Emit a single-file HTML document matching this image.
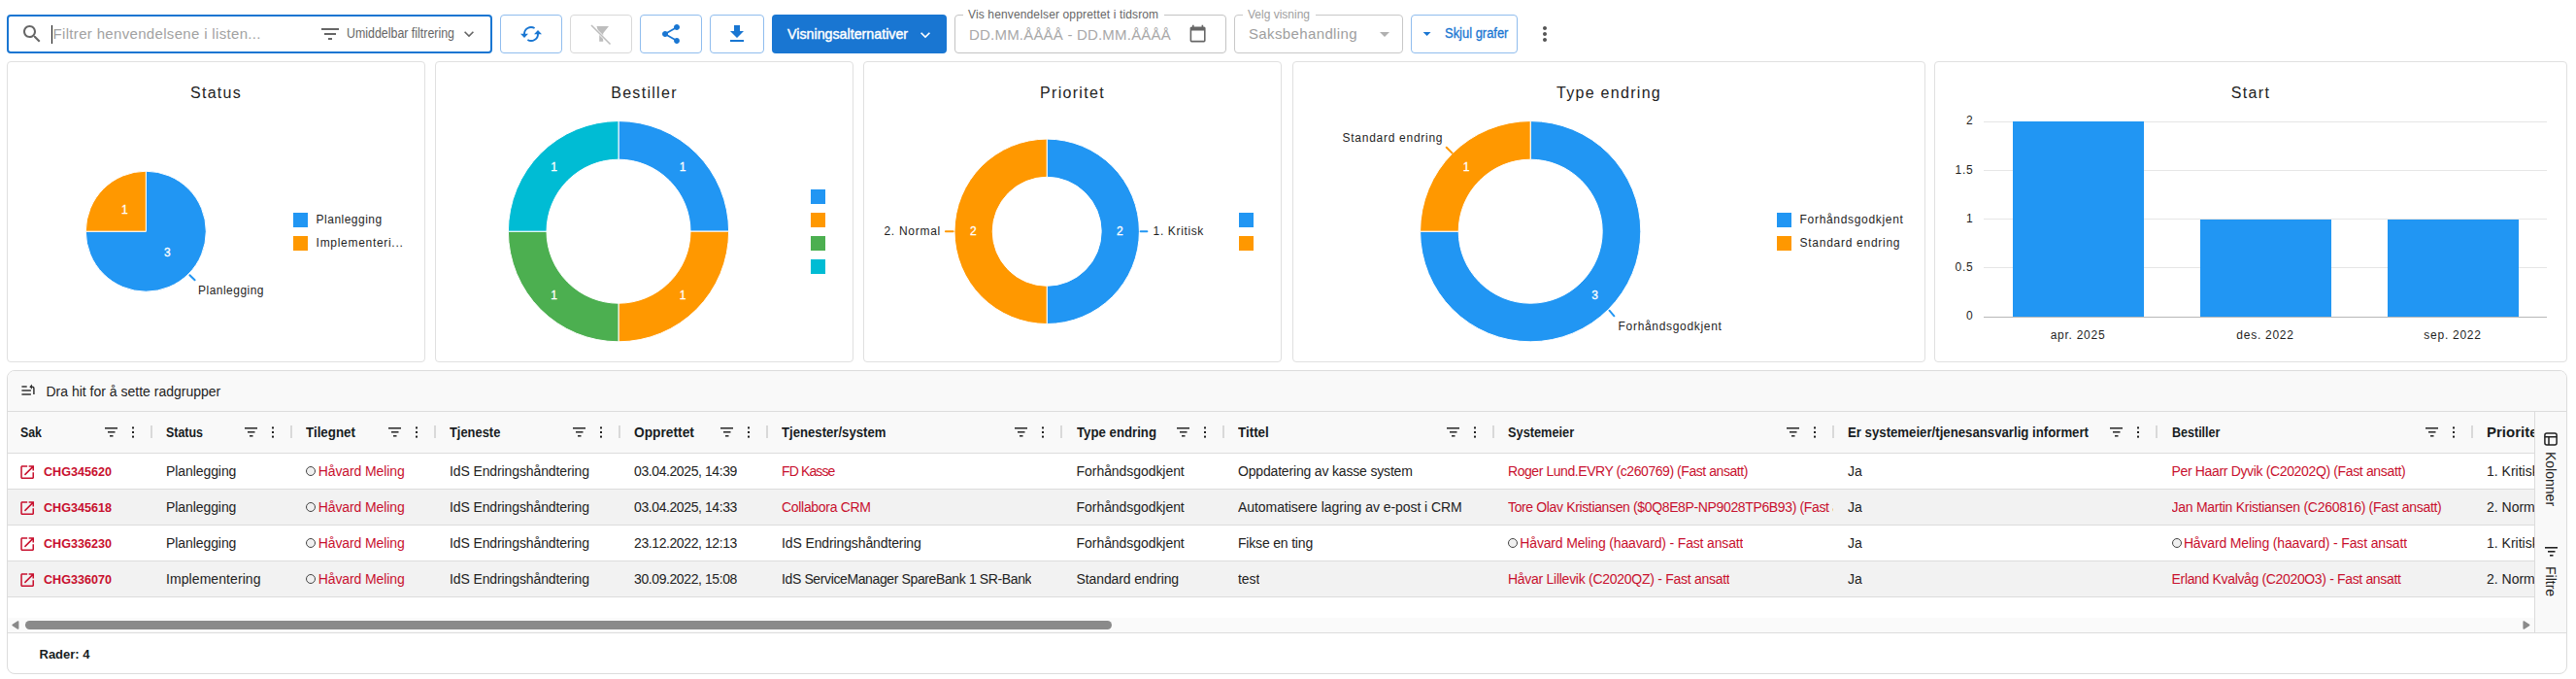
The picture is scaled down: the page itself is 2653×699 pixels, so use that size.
<!DOCTYPE html>
<html><head><meta charset="utf-8"><style>
html,body{margin:0;padding:0;background:#fff;}
body{width:2653px;height:699px;position:relative;overflow:hidden;font-family:"Liberation Sans", sans-serif;}
.t{position:absolute;white-space:nowrap;line-height:1;}
</style></head><body>
<div style="position:absolute;left:7px;top:15px;width:500px;height:40px;box-sizing:border-box;border:2px solid #1976d2;border-radius:4px;background:#fff;"></div>
<svg style="position:absolute;left:21px;top:23px;" width="24" height="24" viewBox="0 0 24 24"><path fill="#666" d="M15.5 14h-.79l-.28-.27C15.41 12.59 16 11.11 16 9.5 16 5.91 13.09 3 9.5 3S3 5.91 3 9.5 5.91 16 9.5 16c1.61 0 3.09-.59 4.23-1.57l.27.28v.79l5 4.99L20.49 19l-4.99-5zm-6 0C7.01 14 5 11.99 5 9.5S7.01 5 9.5 5 14 7.01 14 9.5 11.99 14 9.5 14z"/></svg>
<div style="position:absolute;left:53px;top:26px;width:1px;height:19px;box-sizing:border-box;background:#111;"></div>
<div class="t" style="left:54.50px;top:24.25px;font-size:15px;line-height:22.50px;color:#a2a2a2;letter-spacing:0.33px;">Filtrer henvendelsene i listen...</div>
<svg style="position:absolute;left:328px;top:23px;" width="24" height="24" viewBox="0 0 24 24"><path fill="#666" d="M10 18h4v-2h-4v2zM3 6v2h18V6H3zm3 7h12v-2H6v2z"/></svg>
<div class="t" style="left:357.00px;top:23.85px;font-size:14px;line-height:21.00px;color:#666;transform-origin:0 0;transform:scaleX(0.886);">Umiddelbar filtrering</div>
<svg style="position:absolute;left:473px;top:24.7px;" width="20" height="20" viewBox="0 0 24 24"><path fill="#666" d="M16.59 8.59L12 13.17 7.41 8.59 6 10l6 6 6-6z"/></svg>
<div style="position:absolute;left:515px;top:15px;width:64px;height:40px;box-sizing:border-box;border:1px solid #90bdee;border-radius:4px;"></div>
<svg style="position:absolute;left:535px;top:25px;" width="24" height="22" viewBox="0 0 24 22"><g fill="none" stroke="#1976d2" stroke-width="1.9">
<path d="M5 10.3 A7 7 0 0 1 15.6 4"/><path d="M19 9.7 A7 7 0 0 1 8.4 16"/></g>
<path fill="#1976d2" d="M1 9.7 L9 9.7 L5 13.9 Z"/><path fill="#1976d2" d="M15 10.3 L23 10.3 L19 6.1 Z"/></svg>
<div style="position:absolute;left:587px;top:15px;width:64px;height:40px;box-sizing:border-box;border:1px solid #d9d9d9;border-radius:4px;"></div>
<svg style="position:absolute;left:605px;top:24px;" width="26" height="24" viewBox="0 0 26 24"><path fill="#bdbdbd" d="M9.5 3 H22 L16.2 10.2 V18.8 H12.2 V12.5 Z"/>
<path stroke="#fff" stroke-width="2.6" d="M4 2 L23.5 21.5"/><path stroke="#bdbdbd" stroke-width="1.6" d="M4 2 L23.5 21.5"/></svg>
<div style="position:absolute;left:659px;top:15px;width:64px;height:40px;box-sizing:border-box;border:1px solid #90bdee;border-radius:4px;"></div>
<svg style="position:absolute;left:679px;top:22.6px;" width="24" height="24" viewBox="0 0 24 24"><path fill="#1976d2" d="M18 16.08c-.76 0-1.44.3-1.96.77L8.91 12.7c.05-.23.09-.46.09-.7s-.04-.47-.09-.7l7.05-4.11c.54.5 1.25.81 2.04.81 1.66 0 3-1.34 3-3s-1.340-3-3-3-3 1.34-3 3c0 .24.04.47.09.7L8.04 9.81C7.5 9.310 6.79 9 6 9c-1.66 0-3 1.34-3 3s1.34 3 3 3c.79 0 1.5-.31 2.04-.81l7.12 4.16c-.05.21-.08.43-.08.65 0 1.61 1.31 2.92 2.92 2.92 1.61 0 2.92-1.31 2.920-2.92s-1.31-2.92-2.92-2.92z"/></svg>
<div style="position:absolute;left:731px;top:15px;width:56px;height:40px;box-sizing:border-box;border:1px solid #90bdee;border-radius:4px;"></div>
<svg style="position:absolute;left:747px;top:22.8px;" width="24" height="24" viewBox="0 0 24 24"><path fill="#1976d2" d="M19 9h-4V3H9v6H5l7 7 7-7zM5 18v2h14v-2H5z"/></svg>
<div style="position:absolute;left:795px;top:15px;width:180px;height:40px;box-sizing:border-box;background:#1976d2;border-radius:4px;"></div>
<div class="t" style="left:811.00px;top:23.75px;font-size:15px;line-height:22.50px;color:#fff;transform-origin:0 0;transform:scaleX(0.95);-webkit-text-stroke:0.45px #fff;">Visningsalternativer</div>
<svg style="position:absolute;left:943px;top:26px;" width="20" height="20" viewBox="0 0 24 24"><path fill="#fff" d="M16.59 8.59L12 13.17 7.41 8.59 6 10l6 6 6-6z"/></svg>
<div style="position:absolute;left:983px;top:15px;width:280px;height:40px;box-sizing:border-box;border:1px solid #c4c4c4;border-radius:4px;"></div>
<div style="position:absolute;left:992px;top:10px;width:207px;height:10px;box-sizing:border-box;background:#fff;"></div>
<div class="t" style="left:997.00px;top:5.74px;font-size:12px;line-height:18.00px;color:#666;letter-spacing:0.14px;">Vis henvendelser opprettet i tidsrom</div>
<div class="t" style="left:998.00px;top:24.55px;font-size:15px;line-height:22.50px;color:#a8a8a8;letter-spacing:0.2px;">DD.MM.ÅÅÅÅ - DD.MM.ÅÅÅÅ</div>
<svg style="position:absolute;left:1224.4px;top:25.4px;" width="19.2" height="19.2" viewBox="0 0 24 24"><path fill="#666" d="M20 3h-1V1h-2v2H7V1H5v2H4c-1.1 0-2 .9-2 2v16c0 1.1.9 2 2 2h16c1.1 0 2-.9 2-2V5c0-1.1-.9-2-2-2zm0 18H4V8h16v13z"/></svg>
<div style="position:absolute;left:1271px;top:15px;width:174px;height:40px;box-sizing:border-box;border:1px solid #c8c8c8;border-radius:4px;"></div>
<div style="position:absolute;left:1280px;top:10px;width:75px;height:10px;box-sizing:border-box;background:#fff;"></div>
<div class="t" style="left:1285.00px;top:5.74px;font-size:12px;line-height:18.00px;color:#a0a0a0;">Velg visning</div>
<div class="t" style="left:1286.00px;top:24.35px;font-size:15px;line-height:22.50px;color:#9e9e9e;letter-spacing:0.37px;">Saksbehandling</div>
<svg style="position:absolute;left:1414px;top:22.6px;" width="24" height="24" viewBox="0 0 24 24"><path fill="#b0b0b0" d="M7 10l5 5 5-5z"/></svg>
<div style="position:absolute;left:1453px;top:15px;width:110px;height:40px;box-sizing:border-box;border:1px solid #90bdee;border-radius:4px;"></div>
<svg style="position:absolute;left:1460.4px;top:25.3px;" width="19.2" height="19.2" viewBox="0 0 24 24"><path fill="#1976d2" d="M7 10l5 5 5-5z"/></svg>
<div class="t" style="left:1487.60px;top:24.05px;font-size:14px;line-height:21.00px;color:#1976d2;transform-origin:0 0;transform:scaleX(0.924);-webkit-text-stroke:0.3px #1976d2;">Skjul grafer</div>
<svg style="position:absolute;left:1579px;top:23.2px;" width="24" height="24" viewBox="0 0 24 24"><path fill="#555" d="M12 8c1.1 0 2-.9 2-2s-.9-2-2-2-2 .9-2 2 .9 2 2 2zm0 2c-1.1 0-2 .9-2 2s.9 2 2 2 2-.9 2-2-.9-2-2-2zm0 6c-1.1 0-2 .9-2 2s.9 2 2 2 2-.9 2-2-.9-2-2-2z"/></svg>
<div style="position:absolute;left:7px;top:63px;width:431px;height:310px;box-sizing:border-box;border:1px solid #e0e0e0;border-radius:4px;background:#fff;"></div>
<div class="t" style="left:222.50px;top:84.06px;font-size:16px;line-height:24.00px;color:#222;letter-spacing:1.3px;transform:translateX(-50%);">Status</div>
<div style="position:absolute;left:448px;top:63px;width:431px;height:310px;box-sizing:border-box;border:1px solid #e0e0e0;border-radius:4px;background:#fff;"></div>
<div class="t" style="left:663.50px;top:84.06px;font-size:16px;line-height:24.00px;color:#222;letter-spacing:1.3px;transform:translateX(-50%);">Bestiller</div>
<div style="position:absolute;left:889px;top:63px;width:431px;height:310px;box-sizing:border-box;border:1px solid #e0e0e0;border-radius:4px;background:#fff;"></div>
<div class="t" style="left:1104.50px;top:84.06px;font-size:16px;line-height:24.00px;color:#222;letter-spacing:1.3px;transform:translateX(-50%);">Prioritet</div>
<div style="position:absolute;left:1331px;top:63px;width:652px;height:310px;box-sizing:border-box;border:1px solid #e0e0e0;border-radius:4px;background:#fff;"></div>
<div class="t" style="left:1657.00px;top:84.06px;font-size:16px;line-height:24.00px;color:#222;letter-spacing:1.3px;transform:translateX(-50%);">Type endring</div>
<div style="position:absolute;left:1992px;top:63px;width:652px;height:310px;box-sizing:border-box;border:1px solid #e0e0e0;border-radius:4px;background:#fff;"></div>
<div class="t" style="left:2318.00px;top:84.06px;font-size:16px;line-height:24.00px;color:#222;letter-spacing:1.3px;transform:translateX(-50%);">Start</div>
<svg style="position:absolute;left:0;top:0" width="2653" height="400" viewBox="0 0 2653 400"><path d="M150.30 238.20 L150.30 176.20 A62 62 0 1 1 88.30 238.20 Z" fill="#2196f3" stroke="#fff" stroke-width="1"/><path d="M150.30 238.20 L88.30 238.20 A62 62 0 0 1 150.30 176.20 Z" fill="#ff9800" stroke="#fff" stroke-width="1"/><path d="M637.00 124.60 A113.6 113.6 0 0 1 750.60 238.20 L711.00 238.20 A74 74 0 0 0 637.00 164.20 Z" fill="#2196f3" stroke="#fff" stroke-width="1"/><path d="M750.60 238.20 A113.6 113.6 0 0 1 637.00 351.80 L637.00 312.20 A74 74 0 0 0 711.00 238.20 Z" fill="#ff9800" stroke="#fff" stroke-width="1"/><path d="M637.00 351.80 A113.6 113.6 0 0 1 523.40 238.20 L563.00 238.20 A74 74 0 0 0 637.00 312.20 Z" fill="#4caf50" stroke="#fff" stroke-width="1"/><path d="M523.40 238.20 A113.6 113.6 0 0 1 637.00 124.60 L637.00 164.20 A74 74 0 0 0 563.00 238.20 Z" fill="#00bcd4" stroke="#fff" stroke-width="1"/><path d="M1078.20 143.10 A95.2 95.2 0 0 1 1078.20 333.50 L1078.20 294.30 A56 56 0 0 0 1078.20 182.30 Z" fill="#2196f3" stroke="#fff" stroke-width="1"/><path d="M1078.20 333.50 A95.2 95.2 0 0 1 1078.20 143.10 L1078.20 182.30 A56 56 0 0 0 1078.20 294.30 Z" fill="#ff9800" stroke="#fff" stroke-width="1"/><path d="M1576.20 124.60 A113.6 113.6 0 1 1 1462.60 238.20 L1502.20 238.20 A74 74 0 1 0 1576.20 164.20 Z" fill="#2196f3" stroke="#fff" stroke-width="1"/><path d="M1462.60 238.20 A113.6 113.6 0 0 1 1576.20 124.60 L1576.20 164.20 A74 74 0 0 0 1502.20 238.20 Z" fill="#ff9800" stroke="#fff" stroke-width="1"/><path d="M195.4 283.2 L200.6 288.3" stroke="#2196f3" stroke-width="2" stroke-linecap="round"/><path d="M973.9 238.3 L981.6 238.3" stroke="#ff9800" stroke-width="2" stroke-linecap="round"/><path d="M1174.7 238.3 L1181.4 238.3" stroke="#2196f3" stroke-width="2" stroke-linecap="round"/><path d="M1489.7 151.7 L1495.6 157.6" stroke="#ff9800" stroke-width="2" stroke-linecap="round"/><path d="M1657.5 319.7 L1662.4 325.3" stroke="#2196f3" stroke-width="2" stroke-linecap="round"/><rect x="2043" y="125" width="580" height="1" fill="#e6e6e6"/><rect x="2043" y="175" width="580" height="1" fill="#e6e6e6"/><rect x="2043" y="225" width="580" height="1" fill="#e6e6e6"/><rect x="2043" y="275" width="580" height="1" fill="#e6e6e6"/><rect x="2073" y="125" width="135" height="201" fill="#2196f3"/><rect x="2266" y="226" width="135" height="100" fill="#2196f3"/><rect x="2459" y="226" width="135" height="100" fill="#2196f3"/><rect x="2043" y="326" width="580" height="1" fill="#b8b8b8"/></svg>
<div style="position:absolute;left:302px;top:219px;width:15px;height:15px;box-sizing:border-box;background:#2196f3"></div>
<div style="position:absolute;left:302px;top:243px;width:15px;height:15px;box-sizing:border-box;background:#ff9800"></div>
<div class="t" style="left:325.60px;top:216.84px;font-size:12px;line-height:18.00px;color:#1e1e1e;letter-spacing:0.48px;">Planlegging</div>
<div class="t" style="left:325.60px;top:240.84px;font-size:12px;line-height:18.00px;color:#1e1e1e;letter-spacing:0.7px;">Implementeri...</div>
<div style="position:absolute;left:835px;top:195px;width:15px;height:15px;box-sizing:border-box;background:#2196f3"></div>
<div style="position:absolute;left:835px;top:219px;width:15px;height:15px;box-sizing:border-box;background:#ff9800"></div>
<div style="position:absolute;left:835px;top:243px;width:15px;height:15px;box-sizing:border-box;background:#4caf50"></div>
<div style="position:absolute;left:835px;top:267px;width:15px;height:15px;box-sizing:border-box;background:#00bcd4"></div>
<div style="position:absolute;left:1276px;top:219px;width:15px;height:15px;box-sizing:border-box;background:#2196f3"></div>
<div style="position:absolute;left:1830px;top:219px;width:15px;height:15px;box-sizing:border-box;background:#2196f3"></div>
<div style="position:absolute;left:1276px;top:243px;width:15px;height:15px;box-sizing:border-box;background:#ff9800"></div>
<div style="position:absolute;left:1830px;top:243px;width:15px;height:15px;box-sizing:border-box;background:#ff9800"></div>
<div class="t" style="left:1853.60px;top:216.84px;font-size:12px;line-height:18.00px;color:#1e1e1e;letter-spacing:0.68px;">Forhåndsgodkjent</div>
<div class="t" style="left:1853.60px;top:240.84px;font-size:12px;line-height:18.00px;color:#1e1e1e;letter-spacing:0.72px;">Standard endring</div>
<div class="t" style="left:128.30px;top:206.94px;font-size:12px;line-height:18.00px;color:#fff;transform:translateX(-50%);-webkit-text-stroke:0.3px #fff;">1</div>
<div class="t" style="left:172.30px;top:250.54px;font-size:12px;line-height:18.00px;color:#fff;transform:translateX(-50%);-webkit-text-stroke:0.3px #fff;">3</div>
<div class="t" style="left:703.00px;top:162.74px;font-size:12px;line-height:18.00px;color:#fff;transform:translateX(-50%);-webkit-text-stroke:0.3px #fff;">1</div>
<div class="t" style="left:703.00px;top:295.14px;font-size:12px;line-height:18.00px;color:#fff;transform:translateX(-50%);-webkit-text-stroke:0.3px #fff;">1</div>
<div class="t" style="left:570.60px;top:295.14px;font-size:12px;line-height:18.00px;color:#fff;transform:translateX(-50%);-webkit-text-stroke:0.3px #fff;">1</div>
<div class="t" style="left:570.60px;top:162.74px;font-size:12px;line-height:18.00px;color:#fff;transform:translateX(-50%);-webkit-text-stroke:0.3px #fff;">1</div>
<div class="t" style="left:1153.30px;top:229.14px;font-size:12px;line-height:18.00px;color:#fff;transform:translateX(-50%);-webkit-text-stroke:0.3px #fff;">2</div>
<div class="t" style="left:1002.30px;top:229.14px;font-size:12px;line-height:18.00px;color:#fff;transform:translateX(-50%);-webkit-text-stroke:0.3px #fff;">2</div>
<div class="t" style="left:1642.50px;top:294.54px;font-size:12px;line-height:18.00px;color:#fff;transform:translateX(-50%);-webkit-text-stroke:0.3px #fff;">3</div>
<div class="t" style="left:1510.00px;top:162.84px;font-size:12px;line-height:18.00px;color:#fff;transform:translateX(-50%);-webkit-text-stroke:0.3px #fff;">1</div>
<div class="t" style="left:204.00px;top:289.84px;font-size:12px;line-height:18.00px;color:#1e1e1e;letter-spacing:0.48px;">Planlegging</div>
<div class="t" style="left:910.40px;top:229.14px;font-size:12px;line-height:18.00px;color:#1e1e1e;letter-spacing:0.73px;">2. Normal</div>
<div class="t" style="left:1187.60px;top:229.14px;font-size:12px;line-height:18.00px;color:#1e1e1e;letter-spacing:0.64px;">1. Kritisk</div>
<div class="t" style="left:1382.60px;top:132.74px;font-size:12px;line-height:18.00px;color:#1e1e1e;letter-spacing:0.72px;">Standard endring</div>
<div class="t" style="left:1666.60px;top:327.44px;font-size:12px;line-height:18.00px;color:#1e1e1e;letter-spacing:0.68px;">Forhåndsgodkjent</div>
<div class="t" style="left:2032.40px;top:115.14px;font-size:12px;line-height:18.00px;color:#1e1e1e;letter-spacing:0.7px;transform:translateX(-100%);">2</div>
<div class="t" style="left:2032.40px;top:166.14px;font-size:12px;line-height:18.00px;color:#1e1e1e;letter-spacing:0.7px;transform:translateX(-100%);">1.5</div>
<div class="t" style="left:2032.40px;top:215.64px;font-size:12px;line-height:18.00px;color:#1e1e1e;letter-spacing:0.7px;transform:translateX(-100%);">1</div>
<div class="t" style="left:2032.40px;top:265.64px;font-size:12px;line-height:18.00px;color:#1e1e1e;letter-spacing:0.7px;transform:translateX(-100%);">0.5</div>
<div class="t" style="left:2032.40px;top:315.84px;font-size:12px;line-height:18.00px;color:#1e1e1e;letter-spacing:0.7px;transform:translateX(-100%);">0</div>
<div class="t" style="left:2140.00px;top:335.64px;font-size:12px;line-height:18.00px;color:#1e1e1e;letter-spacing:0.74px;transform:translateX(-50%);">apr. 2025</div>
<div class="t" style="left:2333.00px;top:335.64px;font-size:12px;line-height:18.00px;color:#1e1e1e;letter-spacing:0.74px;transform:translateX(-50%);">des. 2022</div>
<div class="t" style="left:2526.00px;top:335.64px;font-size:12px;line-height:18.00px;color:#1e1e1e;letter-spacing:0.74px;transform:translateX(-50%);">sep. 2022</div>
<div style="position:absolute;left:7px;top:381px;width:2637px;height:313px;box-sizing:border-box;border:1px solid #dcdcdc;border-radius:8px;background:#fff;overflow:hidden;"></div>
<div style="position:absolute;left:8px;top:382px;width:2635px;height:41px;box-sizing:border-box;background:#f9f9f9;border-radius:7px 7px 0 0;"></div>
<div style="position:absolute;left:8px;top:423px;width:2635px;height:1px;box-sizing:border-box;background:#dcdcdc"></div>
<svg style="position:absolute;left:20px;top:392px;" width="18" height="18" viewBox="0 0 18 18"><g stroke="#333" stroke-width="1.5" fill="none"><path d="M2.4 5.9h5.3M2.4 9.9h9.5M2.4 13.9h9.5"/><path d="M14.9 14V7.8c0-1.1-.8-1.6-1.6-1.6h-1.6"/></g><path fill="#333" d="M10.3 6.2 L13 3.6 L13 8.8Z"/></svg>
<div class="t" style="left:47.50px;top:392.65px;font-size:14px;line-height:21.00px;color:#222;">Dra hit for å sette radgrupper</div>
<div style="position:absolute;left:8px;top:424px;width:2602px;height:42px;box-sizing:border-box;background:#f9f9f9;"></div>
<div style="position:absolute;left:8px;top:466px;width:2602px;height:1px;box-sizing:border-box;background:#dcdcdc"></div>
<div style="position:absolute;left:8px;top:467px;width:2602px;height:36px;box-sizing:border-box;background:#fff"></div>
<div style="position:absolute;left:8px;top:503px;width:2602px;height:1px;box-sizing:border-box;background:#dcdcdc"></div>
<div style="position:absolute;left:8px;top:504px;width:2602px;height:36px;box-sizing:border-box;background:#f2f2f2"></div>
<div style="position:absolute;left:8px;top:540px;width:2602px;height:1px;box-sizing:border-box;background:#dcdcdc"></div>
<div style="position:absolute;left:8px;top:541px;width:2602px;height:36px;box-sizing:border-box;background:#fff"></div>
<div style="position:absolute;left:8px;top:577px;width:2602px;height:1px;box-sizing:border-box;background:#dcdcdc"></div>
<div style="position:absolute;left:8px;top:578px;width:2602px;height:36px;box-sizing:border-box;background:#f2f2f2"></div>
<div style="position:absolute;left:8px;top:614px;width:2602px;height:1px;box-sizing:border-box;background:#dcdcdc"></div>
<div style="position:absolute;left:8px;top:636px;width:2602px;height:15px;box-sizing:border-box;background:#fafafa;"></div>
<div style="position:absolute;left:8px;top:651px;width:2635px;height:1px;box-sizing:border-box;background:#dcdcdc"></div>
<div style="position:absolute;left:26px;top:639px;width:1119px;height:9px;box-sizing:border-box;background:#8a8a8a;border-radius:5px;"></div>
<svg style="position:absolute;left:12px;top:639px;" width="8" height="9" viewBox="0 0 8 9"><path fill="#8a8a8a" stroke="#8a8a8a" stroke-width="1.6" stroke-linejoin="round" d="M1.2 4.5 L6.6 1 L6.6 8Z"/></svg>
<svg style="position:absolute;left:2598px;top:639px;" width="8" height="9" viewBox="0 0 8 9"><path fill="#8a8a8a" stroke="#8a8a8a" stroke-width="1.6" stroke-linejoin="round" d="M6.6 4.5 L1.2 1 L1.2 8Z"/></svg>
<div class="t" style="left:40.50px;top:663.75px;font-size:13px;line-height:19.50px;color:#181d1f;font-weight:700;">Rader: 4</div>
<div style="position:absolute;left:8px;top:424px;width:2602px;height:212px;overflow:hidden;">
<div class="t" style="left:13.00px;top:10.65px;font-size:14px;line-height:21.00px;color:#181d1f;font-weight:700;transform-origin:0 0;transform:scaleX(0.8831);">Sak</div>
<svg style="position:absolute;left:100px;top:16px;" width="13" height="10" viewBox="0 0 13 10"><g fill="#333"><rect x="0" y="0" width="13" height="1.6"/><rect x="3" y="4" width="7.5" height="1.6"/><rect x="5" y="8" width="3.5" height="1.6"/></g></svg>
<svg style="position:absolute;left:128px;top:15px;" width="2" height="12" viewBox="0 0 2 12"><g fill="#222"><rect x="0" y="0.4" width="2" height="2"/><rect x="0" y="5" width="2" height="2"/><rect x="0" y="9.6" width="2" height="2"/></g></svg>
<div style="position:absolute;left:147px;top:14px;width:2px;height:13px;box-sizing:border-box;background:#d9d9d9;"></div>
<div class="t" style="left:163.00px;top:10.65px;font-size:14px;line-height:21.00px;color:#181d1f;font-weight:700;transform-origin:0 0;transform:scaleX(0.8881);">Status</div>
<svg style="position:absolute;left:244px;top:16px;" width="13" height="10" viewBox="0 0 13 10"><g fill="#333"><rect x="0" y="0" width="13" height="1.6"/><rect x="3" y="4" width="7.5" height="1.6"/><rect x="5" y="8" width="3.5" height="1.6"/></g></svg>
<svg style="position:absolute;left:272px;top:15px;" width="2" height="12" viewBox="0 0 2 12"><g fill="#222"><rect x="0" y="0.4" width="2" height="2"/><rect x="0" y="5" width="2" height="2"/><rect x="0" y="9.6" width="2" height="2"/></g></svg>
<div style="position:absolute;left:291px;top:14px;width:2px;height:13px;box-sizing:border-box;background:#d9d9d9;"></div>
<div class="t" style="left:307.00px;top:10.65px;font-size:14px;line-height:21.00px;color:#181d1f;font-weight:700;transform-origin:0 0;transform:scaleX(0.9547);">Tilegnet</div>
<svg style="position:absolute;left:392px;top:16px;" width="13" height="10" viewBox="0 0 13 10"><g fill="#333"><rect x="0" y="0" width="13" height="1.6"/><rect x="3" y="4" width="7.5" height="1.6"/><rect x="5" y="8" width="3.5" height="1.6"/></g></svg>
<svg style="position:absolute;left:420px;top:15px;" width="2" height="12" viewBox="0 0 2 12"><g fill="#222"><rect x="0" y="0.4" width="2" height="2"/><rect x="0" y="5" width="2" height="2"/><rect x="0" y="9.6" width="2" height="2"/></g></svg>
<div style="position:absolute;left:439px;top:14px;width:2px;height:13px;box-sizing:border-box;background:#d9d9d9;"></div>
<div class="t" style="left:455.00px;top:10.65px;font-size:14px;line-height:21.00px;color:#181d1f;font-weight:700;transform-origin:0 0;transform:scaleX(0.9207);">Tjeneste</div>
<svg style="position:absolute;left:582px;top:16px;" width="13" height="10" viewBox="0 0 13 10"><g fill="#333"><rect x="0" y="0" width="13" height="1.6"/><rect x="3" y="4" width="7.5" height="1.6"/><rect x="5" y="8" width="3.5" height="1.6"/></g></svg>
<svg style="position:absolute;left:610px;top:15px;" width="2" height="12" viewBox="0 0 2 12"><g fill="#222"><rect x="0" y="0.4" width="2" height="2"/><rect x="0" y="5" width="2" height="2"/><rect x="0" y="9.6" width="2" height="2"/></g></svg>
<div style="position:absolute;left:629px;top:14px;width:2px;height:13px;box-sizing:border-box;background:#d9d9d9;"></div>
<div class="t" style="left:645.00px;top:10.65px;font-size:14px;line-height:21.00px;color:#181d1f;font-weight:700;transform-origin:0 0;transform:scaleX(0.9825);">Opprettet</div>
<svg style="position:absolute;left:734px;top:16px;" width="13" height="10" viewBox="0 0 13 10"><g fill="#333"><rect x="0" y="0" width="13" height="1.6"/><rect x="3" y="4" width="7.5" height="1.6"/><rect x="5" y="8" width="3.5" height="1.6"/></g></svg>
<svg style="position:absolute;left:762px;top:15px;" width="2" height="12" viewBox="0 0 2 12"><g fill="#222"><rect x="0" y="0.4" width="2" height="2"/><rect x="0" y="5" width="2" height="2"/><rect x="0" y="9.6" width="2" height="2"/></g></svg>
<div style="position:absolute;left:781px;top:14px;width:2px;height:13px;box-sizing:border-box;background:#d9d9d9;"></div>
<div class="t" style="left:797.00px;top:10.65px;font-size:14px;line-height:21.00px;color:#181d1f;font-weight:700;transform-origin:0 0;transform:scaleX(0.9388);">Tjenester/system</div>
<svg style="position:absolute;left:1037px;top:16px;" width="13" height="10" viewBox="0 0 13 10"><g fill="#333"><rect x="0" y="0" width="13" height="1.6"/><rect x="3" y="4" width="7.5" height="1.6"/><rect x="5" y="8" width="3.5" height="1.6"/></g></svg>
<svg style="position:absolute;left:1065px;top:15px;" width="2" height="12" viewBox="0 0 2 12"><g fill="#222"><rect x="0" y="0.4" width="2" height="2"/><rect x="0" y="5" width="2" height="2"/><rect x="0" y="9.6" width="2" height="2"/></g></svg>
<div style="position:absolute;left:1084px;top:14px;width:2px;height:13px;box-sizing:border-box;background:#d9d9d9;"></div>
<div class="t" style="left:1100.60px;top:10.65px;font-size:14px;line-height:21.00px;color:#181d1f;font-weight:700;transform-origin:0 0;transform:scaleX(0.9441);">Type endring</div>
<svg style="position:absolute;left:1203.5px;top:16px;" width="13" height="10" viewBox="0 0 13 10"><g fill="#333"><rect x="0" y="0" width="13" height="1.6"/><rect x="3" y="4" width="7.5" height="1.6"/><rect x="5" y="8" width="3.5" height="1.6"/></g></svg>
<svg style="position:absolute;left:1231.5px;top:15px;" width="2" height="12" viewBox="0 0 2 12"><g fill="#222"><rect x="0" y="0.4" width="2" height="2"/><rect x="0" y="5" width="2" height="2"/><rect x="0" y="9.6" width="2" height="2"/></g></svg>
<div style="position:absolute;left:1250.5px;top:14px;width:2px;height:13px;box-sizing:border-box;background:#d9d9d9;"></div>
<div class="t" style="left:1267.00px;top:10.65px;font-size:14px;line-height:21.00px;color:#181d1f;font-weight:700;transform-origin:0 0;transform:scaleX(0.9581);">Tittel</div>
<svg style="position:absolute;left:1482px;top:16px;" width="13" height="10" viewBox="0 0 13 10"><g fill="#333"><rect x="0" y="0" width="13" height="1.6"/><rect x="3" y="4" width="7.5" height="1.6"/><rect x="5" y="8" width="3.5" height="1.6"/></g></svg>
<svg style="position:absolute;left:1510px;top:15px;" width="2" height="12" viewBox="0 0 2 12"><g fill="#222"><rect x="0" y="0.4" width="2" height="2"/><rect x="0" y="5" width="2" height="2"/><rect x="0" y="9.6" width="2" height="2"/></g></svg>
<div style="position:absolute;left:1529px;top:14px;width:2px;height:13px;box-sizing:border-box;background:#d9d9d9;"></div>
<div class="t" style="left:1545.00px;top:10.65px;font-size:14px;line-height:21.00px;color:#181d1f;font-weight:700;transform-origin:0 0;transform:scaleX(0.9128);">Systemeier</div>
<svg style="position:absolute;left:1832px;top:16px;" width="13" height="10" viewBox="0 0 13 10"><g fill="#333"><rect x="0" y="0" width="13" height="1.6"/><rect x="3" y="4" width="7.5" height="1.6"/><rect x="5" y="8" width="3.5" height="1.6"/></g></svg>
<svg style="position:absolute;left:1860px;top:15px;" width="2" height="12" viewBox="0 0 2 12"><g fill="#222"><rect x="0" y="0.4" width="2" height="2"/><rect x="0" y="5" width="2" height="2"/><rect x="0" y="9.6" width="2" height="2"/></g></svg>
<div style="position:absolute;left:1879px;top:14px;width:2px;height:13px;box-sizing:border-box;background:#d9d9d9;"></div>
<div class="t" style="left:1895.00px;top:10.65px;font-size:14px;line-height:21.00px;color:#181d1f;font-weight:700;transform-origin:0 0;transform:scaleX(0.9429);">Er systemeier/tjenesansvarlig informert</div>
<svg style="position:absolute;left:2165px;top:16px;" width="13" height="10" viewBox="0 0 13 10"><g fill="#333"><rect x="0" y="0" width="13" height="1.6"/><rect x="3" y="4" width="7.5" height="1.6"/><rect x="5" y="8" width="3.5" height="1.6"/></g></svg>
<svg style="position:absolute;left:2193px;top:15px;" width="2" height="12" viewBox="0 0 2 12"><g fill="#222"><rect x="0" y="0.4" width="2" height="2"/><rect x="0" y="5" width="2" height="2"/><rect x="0" y="9.6" width="2" height="2"/></g></svg>
<div style="position:absolute;left:2212px;top:14px;width:2px;height:13px;box-sizing:border-box;background:#d9d9d9;"></div>
<div class="t" style="left:2228.60px;top:10.65px;font-size:14px;line-height:21.00px;color:#181d1f;font-weight:700;transform-origin:0 0;transform:scaleX(0.8941);">Bestiller</div>
<svg style="position:absolute;left:2490px;top:16px;" width="13" height="10" viewBox="0 0 13 10"><g fill="#333"><rect x="0" y="0" width="13" height="1.6"/><rect x="3" y="4" width="7.5" height="1.6"/><rect x="5" y="8" width="3.5" height="1.6"/></g></svg>
<svg style="position:absolute;left:2518px;top:15px;" width="2" height="12" viewBox="0 0 2 12"><g fill="#222"><rect x="0" y="0.4" width="2" height="2"/><rect x="0" y="5" width="2" height="2"/><rect x="0" y="9.6" width="2" height="2"/></g></svg>
<div style="position:absolute;left:2537px;top:14px;width:2px;height:13px;box-sizing:border-box;background:#d9d9d9;"></div>
<div class="t" style="left:2553.00px;top:10.65px;font-size:14px;line-height:21.00px;color:#181d1f;font-weight:700;transform-origin:0 0;transform:scaleX(1.0712);">Prioritet</div>
<svg style="position:absolute;left:10.899999999999999px;top:52.69999999999999px;" width="18.3" height="18.3" viewBox="0 0 24 24"><path fill="#c8102e" d="M19 19H5V5h7V3H5c-1.11 0-2 .9-2 2v14c0 1.1.89 2 2 2h14c1.1 0 2-.9 2-2v-7h-2v7zM14 3v2h3.59l-9.83 9.83 1.41 1.41L19 6.41V10h2V3h-7z"/></svg>
<div class="t" style="left:37.00px;top:53.18px;font-size:12.6px;line-height:18.90px;color:#c8102e;font-weight:700;">CHG345620</div>
<div class="t" style="left:163.00px;top:51.15px;font-size:14px;line-height:21.00px;color:#222;letter-spacing:-0.08px;max-width:129.0px;overflow:hidden;">Planlegging</div>
<div style="position:absolute;left:307px;top:56.0px;width:8px;height:8px;border:1px solid #444;border-radius:50%;background:#f0f0f0;"></div>
<div class="t" style="left:319.70px;top:51.15px;font-size:14px;line-height:21.00px;color:#c8102e;letter-spacing:-0.097px;">Håvard Meling</div>
<div class="t" style="left:455.00px;top:51.15px;font-size:14px;line-height:21.00px;color:#222;letter-spacing:-0.11px;max-width:175.0px;overflow:hidden;">IdS Endringshåndtering</div>
<div class="t" style="left:645.00px;top:51.15px;font-size:14px;line-height:21.00px;color:#222;letter-spacing:-0.405px;max-width:137.0px;overflow:hidden;">03.04.2025, 14:39</div>
<div class="t" style="left:797.00px;top:51.15px;font-size:14px;line-height:21.00px;color:#c8102e;letter-spacing:-0.87px;max-width:288.0px;overflow:hidden;">FD Kasse</div>
<div class="t" style="left:1100.60px;top:51.15px;font-size:14px;line-height:21.00px;color:#222;letter-spacing:-0.061px;max-width:150.9px;overflow:hidden;">Forhåndsgodkjent</div>
<div class="t" style="left:1267.00px;top:51.15px;font-size:14px;line-height:21.00px;color:#222;letter-spacing:-0.175px;max-width:263.0px;overflow:hidden;">Oppdatering av kasse system</div>
<div class="t" style="left:1545.00px;top:51.15px;font-size:14px;line-height:21.00px;color:#c8102e;letter-spacing:-0.438px;max-width:335.0px;overflow:hidden;">Roger Lund.EVRY (c260769) (Fast ansatt)</div>
<div class="t" style="left:1895.00px;top:51.15px;font-size:14px;line-height:21.00px;color:#222;max-width:318.0px;overflow:hidden;">Ja</div>
<div class="t" style="left:2228.60px;top:51.15px;font-size:14px;line-height:21.00px;color:#c8102e;letter-spacing:-0.352px;max-width:309.4px;overflow:hidden;">Per Haarr Dyvik (C20202Q) (Fast ansatt)</div>
<div class="t" style="left:2553.00px;top:51.15px;font-size:14px;line-height:21.00px;color:#222;max-width:339.0px;overflow:hidden;">1. Kritisk</div>
<svg style="position:absolute;left:10.899999999999999px;top:89.70000000000005px;" width="18.3" height="18.3" viewBox="0 0 24 24"><path fill="#c8102e" d="M19 19H5V5h7V3H5c-1.11 0-2 .9-2 2v14c0 1.1.89 2 2 2h14c1.1 0 2-.9 2-2v-7h-2v7zM14 3v2h3.59l-9.83 9.83 1.41 1.41L19 6.41V10h2V3h-7z"/></svg>
<div class="t" style="left:37.00px;top:90.18px;font-size:12.6px;line-height:18.90px;color:#c8102e;font-weight:700;">CHG345618</div>
<div class="t" style="left:163.00px;top:88.15px;font-size:14px;line-height:21.00px;color:#222;letter-spacing:-0.08px;max-width:129.0px;overflow:hidden;">Planlegging</div>
<div style="position:absolute;left:307px;top:93.0px;width:8px;height:8px;border:1px solid #444;border-radius:50%;background:#f0f0f0;"></div>
<div class="t" style="left:319.70px;top:88.15px;font-size:14px;line-height:21.00px;color:#c8102e;letter-spacing:-0.097px;">Håvard Meling</div>
<div class="t" style="left:455.00px;top:88.15px;font-size:14px;line-height:21.00px;color:#222;letter-spacing:-0.11px;max-width:175.0px;overflow:hidden;">IdS Endringshåndtering</div>
<div class="t" style="left:645.00px;top:88.15px;font-size:14px;line-height:21.00px;color:#222;letter-spacing:-0.405px;max-width:137.0px;overflow:hidden;">03.04.2025, 14:33</div>
<div class="t" style="left:797.00px;top:88.15px;font-size:14px;line-height:21.00px;color:#c8102e;letter-spacing:-0.308px;max-width:288.0px;overflow:hidden;">Collabora CRM</div>
<div class="t" style="left:1100.60px;top:88.15px;font-size:14px;line-height:21.00px;color:#222;letter-spacing:-0.061px;max-width:150.9px;overflow:hidden;">Forhåndsgodkjent</div>
<div class="t" style="left:1267.00px;top:88.15px;font-size:14px;line-height:21.00px;color:#222;letter-spacing:-0.054px;max-width:263.0px;overflow:hidden;">Automatisere lagring av e-post i CRM</div>
<div class="t" style="left:1545.00px;top:88.15px;font-size:14px;line-height:21.00px;color:#c8102e;letter-spacing:-0.36px;max-width:335.0px;overflow:hidden;">Tore Olav Kristiansen ($0Q8E8P-NP9028TP6B93) (Fast ansatt)</div>
<div class="t" style="left:1895.00px;top:88.15px;font-size:14px;line-height:21.00px;color:#222;max-width:318.0px;overflow:hidden;">Ja</div>
<div class="t" style="left:2228.60px;top:88.15px;font-size:14px;line-height:21.00px;color:#c8102e;letter-spacing:-0.285px;max-width:309.4px;overflow:hidden;">Jan Martin Kristiansen (C260816) (Fast ansatt)</div>
<div class="t" style="left:2553.00px;top:88.15px;font-size:14px;line-height:21.00px;color:#222;max-width:339.0px;overflow:hidden;">2. Normal</div>
<svg style="position:absolute;left:10.899999999999999px;top:126.70000000000005px;" width="18.3" height="18.3" viewBox="0 0 24 24"><path fill="#c8102e" d="M19 19H5V5h7V3H5c-1.11 0-2 .9-2 2v14c0 1.1.89 2 2 2h14c1.1 0 2-.9 2-2v-7h-2v7zM14 3v2h3.59l-9.83 9.83 1.41 1.41L19 6.41V10h2V3h-7z"/></svg>
<div class="t" style="left:37.00px;top:127.18px;font-size:12.6px;line-height:18.90px;color:#c8102e;font-weight:700;">CHG336230</div>
<div class="t" style="left:163.00px;top:125.15px;font-size:14px;line-height:21.00px;color:#222;letter-spacing:-0.08px;max-width:129.0px;overflow:hidden;">Planlegging</div>
<div style="position:absolute;left:307px;top:130.0px;width:8px;height:8px;border:1px solid #444;border-radius:50%;background:#f0f0f0;"></div>
<div class="t" style="left:319.70px;top:125.15px;font-size:14px;line-height:21.00px;color:#c8102e;letter-spacing:-0.097px;">Håvard Meling</div>
<div class="t" style="left:455.00px;top:125.15px;font-size:14px;line-height:21.00px;color:#222;letter-spacing:-0.11px;max-width:175.0px;overflow:hidden;">IdS Endringshåndtering</div>
<div class="t" style="left:645.00px;top:125.15px;font-size:14px;line-height:21.00px;color:#222;letter-spacing:-0.405px;max-width:137.0px;overflow:hidden;">23.12.2022, 12:13</div>
<div class="t" style="left:797.00px;top:125.15px;font-size:14px;line-height:21.00px;color:#222;letter-spacing:-0.119px;max-width:288.0px;overflow:hidden;">IdS Endringshåndtering</div>
<div class="t" style="left:1100.60px;top:125.15px;font-size:14px;line-height:21.00px;color:#222;letter-spacing:-0.061px;max-width:150.9px;overflow:hidden;">Forhåndsgodkjent</div>
<div class="t" style="left:1267.00px;top:125.15px;font-size:14px;line-height:21.00px;color:#222;letter-spacing:-0.183px;max-width:263.0px;overflow:hidden;">Fikse en ting</div>
<div style="position:absolute;left:1545px;top:130.0px;width:8px;height:8px;border:1px solid #444;border-radius:50%;background:#f0f0f0;"></div>
<div class="t" style="left:1557.30px;top:125.15px;font-size:14px;line-height:21.00px;color:#c8102e;letter-spacing:-0.156px;max-width:322.7px;overflow:hidden;">Håvard Meling (haavard) - Fast ansatt</div>
<div class="t" style="left:1895.00px;top:125.15px;font-size:14px;line-height:21.00px;color:#222;max-width:318.0px;overflow:hidden;">Ja</div>
<div style="position:absolute;left:2228.6px;top:130.0px;width:8px;height:8px;border:1px solid #444;border-radius:50%;background:#f0f0f0;"></div>
<div class="t" style="left:2240.90px;top:125.15px;font-size:14px;line-height:21.00px;color:#c8102e;letter-spacing:-0.156px;max-width:297.1px;overflow:hidden;">Håvard Meling (haavard) - Fast ansatt</div>
<div class="t" style="left:2553.00px;top:125.15px;font-size:14px;line-height:21.00px;color:#222;max-width:339.0px;overflow:hidden;">1. Kritisk</div>
<svg style="position:absolute;left:10.899999999999999px;top:163.70000000000005px;" width="18.3" height="18.3" viewBox="0 0 24 24"><path fill="#c8102e" d="M19 19H5V5h7V3H5c-1.11 0-2 .9-2 2v14c0 1.1.89 2 2 2h14c1.1 0 2-.9 2-2v-7h-2v7zM14 3v2h3.59l-9.83 9.83 1.41 1.41L19 6.41V10h2V3h-7z"/></svg>
<div class="t" style="left:37.00px;top:164.18px;font-size:12.6px;line-height:18.90px;color:#c8102e;font-weight:700;">CHG336070</div>
<div class="t" style="left:163.00px;top:162.15px;font-size:14px;line-height:21.00px;color:#222;letter-spacing:0.079px;max-width:129.0px;overflow:hidden;">Implementering</div>
<div style="position:absolute;left:307px;top:167.0px;width:8px;height:8px;border:1px solid #444;border-radius:50%;background:#f0f0f0;"></div>
<div class="t" style="left:319.70px;top:162.15px;font-size:14px;line-height:21.00px;color:#c8102e;letter-spacing:-0.097px;">Håvard Meling</div>
<div class="t" style="left:455.00px;top:162.15px;font-size:14px;line-height:21.00px;color:#222;letter-spacing:-0.11px;max-width:175.0px;overflow:hidden;">IdS Endringshåndtering</div>
<div class="t" style="left:645.00px;top:162.15px;font-size:14px;line-height:21.00px;color:#222;letter-spacing:-0.405px;max-width:137.0px;overflow:hidden;">30.09.2022, 15:08</div>
<div class="t" style="left:797.00px;top:162.15px;font-size:14px;line-height:21.00px;color:#222;letter-spacing:-0.379px;max-width:288.0px;overflow:hidden;">IdS ServiceManager SpareBank 1 SR-Bank</div>
<div class="t" style="left:1100.60px;top:162.15px;font-size:14px;line-height:21.00px;color:#222;letter-spacing:-0.126px;max-width:150.9px;overflow:hidden;">Standard endring</div>
<div class="t" style="left:1267.00px;top:162.15px;font-size:14px;line-height:21.00px;color:#222;letter-spacing:-0.091px;max-width:263.0px;overflow:hidden;">test</div>
<div class="t" style="left:1545.00px;top:162.15px;font-size:14px;line-height:21.00px;color:#c8102e;letter-spacing:-0.273px;max-width:335.0px;overflow:hidden;">Håvar Lillevik (C2020QZ) - Fast ansatt</div>
<div class="t" style="left:1895.00px;top:162.15px;font-size:14px;line-height:21.00px;color:#222;max-width:318.0px;overflow:hidden;">Ja</div>
<div class="t" style="left:2228.60px;top:162.15px;font-size:14px;line-height:21.00px;color:#c8102e;letter-spacing:-0.345px;max-width:309.4px;overflow:hidden;">Erland Kvalvåg (C2020O3) - Fast ansatt</div>
<div class="t" style="left:2553.00px;top:162.15px;font-size:14px;line-height:21.00px;color:#222;max-width:339.0px;overflow:hidden;">2. Normal</div>
</div>
<div style="position:absolute;left:2610px;top:424px;width:33px;height:227px;box-sizing:border-box;background:#f9f9f9;border-left:1px solid #dcdcdc;"></div>
<svg style="position:absolute;left:2620px;top:444.5px;" width="14" height="14" viewBox="0 0 14 14"><g fill="none" stroke="#222" stroke-width="1.5"><rect x="0.9" y="0.9" width="12.2" height="12.2" rx="2"/><path d="M0.9 4.8 H13.1 M5 4.8 V13.1"/></g></svg>
<div class="t" style="left:2620px;top:464.8px;font-size:14px;color:#222;transform-origin:0 0;transform:translateX(14px) rotate(90deg);">Kolonner</div>
<svg style="position:absolute;left:2620.5px;top:563px;" width="13" height="10" viewBox="0 0 13 10"><g fill="#222"><rect x="0" y="0" width="13" height="1.6"/><rect x="3" y="4" width="7.5" height="1.6"/><rect x="5" y="8" width="3.5" height="1.6"/></g></svg>
<div class="t" style="left:2620px;top:582.8px;font-size:14px;color:#222;transform-origin:0 0;transform:translateX(14px) rotate(90deg);">Filtre</div>
</body></html>
